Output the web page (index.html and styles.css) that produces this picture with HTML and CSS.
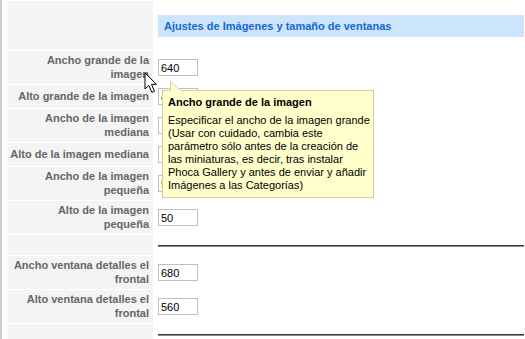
FILE: index.html
```html
<!DOCTYPE html>
<html lang="es">
<head>
    <meta charset="UTF-8">
    <title>Phoca Gallery - Ajustes</title>
    <link rel="stylesheet" href="styles.css">
</head>
<body>

    <div class="panel">
        <table class="admintable">
            <tr>
                <td class="key"></td>
                <td class="value"><div class="section-title">Ajustes de Imágenes y tamaño de ventanas</div></td>
            </tr>
            <tr>
                <td class="key">Ancho grande de la imagen</td>
                <td class="value"><input type="text" value="640"></td>
            </tr>
            <tr>
                <td class="key">Alto grande de la imagen</td>
                <td class="value"><input type="text" value="480"></td>
            </tr>
            <tr>
                <td class="key">Ancho de la imagen mediana</td>
                <td class="value"><input type="text" value="100"></td>
            </tr>
            <tr>
                <td class="key">Alto de la imagen mediana</td>
                <td class="value"><input type="text" value="100"></td>
            </tr>
            <tr>
                <td class="key">Ancho de la imagen pequeña</td>
                <td class="value"><input type="text" value="50"></td>
            </tr>
            <tr>
                <td class="key">Alto de la imagen pequeña</td>
                <td class="value"><input type="text" value="50"></td>
            </tr>
            <tr>
                <td class="key"></td>
                <td class="value"><hr></td>
            </tr>
            <tr>
                <td class="key">Ancho ventana detalles el frontal</td>
                <td class="value"><input type="text" value="680"></td>
            </tr>
            <tr>
                <td class="key">Alto ventana detalles el frontal</td>
                <td class="value"><input type="text" value="560"></td>
            </tr>
            <tr>
                <td class="key"></td>
                <td class="value"><hr></td>
            </tr>
        </table>
    </div>

    <!-- tooltip abierto sobre el primer campo -->
    <svg class="tip-arrow" width="12" height="10" viewBox="0 0 12 10">
        <path d="M0.5 10 L0.5 0.5 L11 9.5 L11 10 Z" fill="#ffffcc"/>
        <path d="M0.5 9.5 L0.5 0.5 L10.5 9.5" fill="none" stroke="#d4d09c"/>
    </svg>
    <div class="tool-tip">
        <div class="tool-title">Ancho grande de la imagen</div>
        <div class="tool-text">Especificar el ancho de la imagen grande (Usar con cuidado, cambia este parámetro sólo antes de la creación de las miniaturas, es decir, tras instalar Phoca Gallery y antes de enviar y añadir Imágenes a las Categorías)</div>
    </div>

    <svg class="cursor" width="14" height="22" viewBox="0 0 14 22">
        <path d="M1 1 L1 17 L4.8 13.3 L7.8 20.3 L10.5 19.2 L7.5 12.3 L12.5 12.3 Z" fill="#fff" stroke="#000" stroke-width="1" stroke-linejoin="round"/>
    </svg>

</body>
</html>
```
FILE: styles.css
```css
body {
    margin: 0;
    font-family: "Liberation Sans", Arial, sans-serif;
    font-size: 11px;
    background-color: #fff;
    overflow: hidden;
}

.panel {
    border-left: 2px solid #cccccc;
    padding: 0 0 0 4px;
    min-height: 339px;
}

.admintable {
    border-spacing: 1px;
    width: 100%;
}

.admintable td {
    padding: 3px 4px;
    vertical-align: middle;
}

.admintable td.key {
    width: 139px;
    padding-left: 3px;
    background-color: #f4f4f4;
    color: #666;
    font-weight: bold;
    text-align: right;
    line-height: 13.5px;
}

.admintable td.value {
    padding-left: 4px;
    padding-right: 0;
}

.section-title {
    margin: 11px 0 10px;
    height: 22px;
    line-height: 22px;
    padding-left: 6px;
    background-color: #cce4fc;
    color: #1768d0;
    font-weight: bold;
}

input {
    box-sizing: border-box;
    width: 40px;
    height: 17px;
    border: 1px solid #c0c0c0;
    padding: 0 2px;
    margin: 0;
    font-family: "Liberation Sans", Arial, sans-serif;
    font-size: 11px;
    color: #000;
    display: block;
}

hr {
    margin: 7px 0 5px;
    height: 0;
    border: 0;
    border-top: 1px solid #3c3c3c;
    border-bottom: 1px solid #8a8a8a;
}

.tool-tip {
    position: absolute;
    left: 162px;
    top: 90px;
    width: 204px;
    padding: 5px 1px 5px 5px;
    background-color: #ffffcc;
    border: 1px solid #d4d09c;
    color: #000;
    line-height: 13px;
}

.tool-title {
    font-weight: bold;
    padding-bottom: 5px;
}

.tip-arrow {
    position: absolute;
    left: 170px;
    top: 81px;
    z-index: 2;
}

.cursor {
    position: absolute;
    left: 144px;
    top: 72px;
    z-index: 3;
}
```
